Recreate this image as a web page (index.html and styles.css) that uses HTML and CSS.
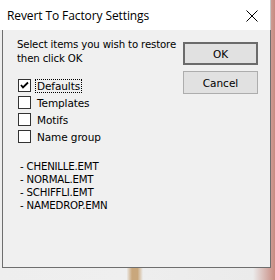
FILE: index.html
```html
<!DOCTYPE html>
<html>
<head>
<meta charset="utf-8">
<link rel="stylesheet" href="styles.css">
</head>
<body>
<div class="desk">
  <div class="win">
    <div class="titlebar">
      <span class="title">Revert To Factory Settings</span>
      <svg class="close" width="12" height="12" viewBox="0 0 12 12"><path d="M0.5 0.5L11.5 11.5M11.5 0.5L0.5 11.5" stroke="#000" stroke-width="1" fill="none"/></svg>
    </div>
    <div class="client">
      <div class="left">
        <p class="prompt">Select items you wish to restore<br>then click OK</p>
        <div class="checks">
          <label class="row"><span class="box"><svg width="9" height="9" viewBox="0 0 9 9"><path d="M1 4L3 6.5L8 1.5" stroke="#000" stroke-width="1.8" fill="none"/></svg></span><span class="lbl focus">Defaults</span></label>
          <label class="row"><span class="box"></span><span class="lbl">Templates</span></label>
          <label class="row"><span class="box"></span><span class="lbl">Motifs</span></label>
          <label class="row"><span class="box"></span><span class="lbl">Name group</span></label>
        </div>
        <div class="files">
          <div>- CHENILLE.EMT</div>
          <div>- NORMAL.EMT</div>
          <div>- SCHIFFLI.EMT</div>
          <div>- NAMEDROP.EMN</div>
        </div>
      </div>
      <div class="buttons">
        <button class="btn default">OK</button>
        <button class="btn">Cancel</button>
      </div>
    </div>
  </div>
</div>
</body>
</html>
```
FILE: styles.css
```css
html, body { margin: 0; padding: 0; }
body {
  width: 275px; height: 280px; overflow: hidden;
  background: linear-gradient(90deg, #eeeeee 0%, #efefef 46%, #c9a77c 48%, #c9a77c 50%, #eeeeee 52%, #ebebeb 92%, #c88a80 100%);
  font-family: "DejaVu Sans", "Liberation Sans", sans-serif;
}
.desk { width: 271px; height: 268px; }
.win { width: 271px; height: 268px; display: flex; flex-direction: column; }
.titlebar {
  height: 30px; background: #fff; display: flex; align-items: center;
  justify-content: space-between; padding: 0 12px 0 7px; box-sizing: border-box;
  border-right: 1px solid #c8c8c8;
}
.title { font-family: "Open Sans", "Noto Sans", sans-serif; font-size: 12px; color: #000; letter-spacing: -0.1px; }
.close { margin-top: 1px; }
.client {
  flex: 1; background: #f0f0f0; margin-left: 2px;
  border: 1px solid #6e6e6e; border-top: none;
  display: flex; padding: 7px 0 0 14px;
}
.left { width: 166px; color: #000; }
.prompt { margin: 1px 0 0; line-height: 14px; font-size: 10.2px; letter-spacing: -0.15px; }
.checks { margin-top: 13px; display: flex; flex-direction: column; gap: 4px; }
.row { display: flex; align-items: center; height: 13px; font-size: 10.5px; letter-spacing: -0.1px; }
.box {
  width: 11px; height: 11px; border: 1px solid #333; background: #fff; margin: 0 5px 0 1px;
  display: flex; align-items: center; justify-content: center;
}
.lbl { padding: 0 1px; }
.focus { outline: 1px dotted #000; outline-offset: 0; }
.files { margin-top: 17px; padding-left: 3px; font-size: 10.2px; line-height: 13px; letter-spacing: -0.2px; }
.buttons { display: flex; flex-direction: column; gap: 6px; margin-top: 5px; }
.btn {
  width: 75px; height: 23px; background: #e1e1e1; border: 1px solid #adadad;
  font-family: "DejaVu Sans", sans-serif; font-size: 10.5px; color: #000; padding: 0;
}
.btn.default { border: 2px solid #6b6b6b; }
```
